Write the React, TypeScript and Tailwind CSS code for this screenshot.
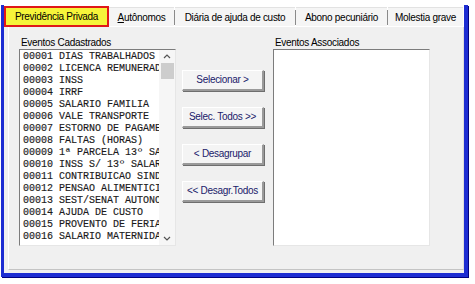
import React from 'react';

const eventos = [
  '00001 DIAS TRABALHADOS',
  '00002 LICENCA REMUNERADA',
  '00003 INSS',
  '00004 IRRF',
  '00005 SALARIO FAMILIA',
  '00006 VALE TRANSPORTE',
  '00007 ESTORNO DE PAGAMENTO',
  '00008 FALTAS (HORAS)',
  '00009 1ª PARCELA 13º SALARIO',
  '00010 INSS S/ 13º SALARIO',
  '00011 CONTRIBUICAO SINDICAL',
  '00012 PENSAO ALIMENTICIA',
  '00013 SEST/SENAT AUTONOMO',
  '00014 AJUDA DE CUSTO',
  '00015 PROVENTO DE FERIAS',
  '00016 SALARIO MATERNIDADE',
];

const Tab = ({ width, children }: { width: string; children: React.ReactNode }) => (
  <div className={`${width} h-[19px] flex items-center justify-center bg-[#f5f5f5] border-t border-[#e2e2e2]`}>
    {children}
  </div>
);

const Sep = () => <div className="w-px h-[15px] bg-[#8a8a8a] self-end mb-[1px]" />;

const WinButton = ({ label }: { label: string }) => (
  <button className="w-[82px] h-[21px] bg-[#f4f4f4] border-t border-l border-white border-b-2 border-r-2 border-b-[#9a9a9a] border-r-[#9a9a9a] shadow-[1px_1px_0_#6e6e6e] text-[10px] tracking-[-0.3px] text-[#20206a] leading-none flex items-center justify-center">
    {label}
  </button>
);

const Chevron = ({ up }: { up?: boolean }) => (
  <svg width="8" height="5" viewBox="0 0 8 5">
    <polyline
      points={up ? '1,4 4,1 7,4' : '1,1 4,4 7,1'}
      fill="none"
      stroke="#555"
      strokeWidth="1.2"
    />
  </svg>
);

export default function App() {
  return (
    <div className="w-[475px] h-[284px] bg-white pt-[5px] pl-[1px] font-['Liberation_Sans',Arial,sans-serif] text-black">
      <div className="w-[467px] h-[272px] border-l-[3px] border-r-[4px] border-b-[4px] border-[#1d2dd2] shadow-[1px_1px_0_#000080] bg-[#f0f0f0] flex flex-col">
        {/* abas */}
        <div className="h-[22px] bg-white flex items-end text-[10px] tracking-[-0.3px]">
          <div className="relative z-10 w-[105px] h-[21px] bg-[#f6f43a] border-2 border-[#e01818] flex items-center justify-center">
            Previdência Privada
          </div>
          <div className="flex items-end border-b border-white">
            <Tab width="w-[65px]">
              <span><span className="underline">A</span>utônomos</span>
            </Tab>
            <Sep />
            <Tab width="w-[120px]">Diária de ajuda de custo</Tab>
            <Sep />
            <Tab width="w-[91px]">Abono pecuniário</Tab>
            <Sep />
            <Tab width="w-[75px]">Molestia grave</Tab>
          </div>
        </div>

        {/* painel */}
        <div className="flex-1 ml-[4px] mb-[3px] border-l border-white border-r border-r-[#dcdcdc] border-b border-b-[#c4c4c4] pt-[10px] pl-[10px] flex items-start">
          <div className="flex flex-col">
            <span className="text-[10px] tracking-[-0.3px] leading-[12px] pl-[2px]">Eventos Cadastrados</span>
            <div className="w-[157px] h-[197px] bg-white border-t border-l border-[#7c7c7c] border-b border-r border-b-[#e6e6e6] border-r-[#e6e6e6] flex">
              <div className="flex-1 overflow-hidden pt-[1px] pl-[3px] font-['Liberation_Mono',monospace] text-[10px] leading-[12px] text-[#1a1a1a] [-webkit-text-stroke:0.15px_#1a1a1a]">
                {eventos.map((e) => (
                  <div key={e} className="whitespace-nowrap">{e}</div>
                ))}
              </div>
              <div className="w-[16px] bg-[#f6f6f6] flex flex-col items-center">
                <div className="h-[13px] flex items-center justify-center"><Chevron up /></div>
                <div className="w-[13px] h-[16px] bg-[#cdcdcd]" />
                <div className="flex-1" />
                <div className="h-[13px] flex items-center justify-center"><Chevron /></div>
              </div>
            </div>
          </div>

          <div className="ml-[6px] mt-[33px] flex flex-col gap-[16px]">
            <WinButton label="Selecionar >" />
            <WinButton label="Selec. Todos >>" />
            <WinButton label="< Desagrupar" />
            <WinButton label="<< Desagr.Todos" />
          </div>

          <div className="ml-[9px] flex flex-col">
            <span className="text-[10px] tracking-[-0.3px] leading-[12px] pl-[2px]">Eventos Associados</span>
            <div className="w-[157px] h-[197px] bg-white border-t border-l border-[#7c7c7c] border-b border-r border-b-[#e6e6e6] border-r-[#e6e6e6]" />
          </div>
        </div>
      </div>
    </div>
  );
}
